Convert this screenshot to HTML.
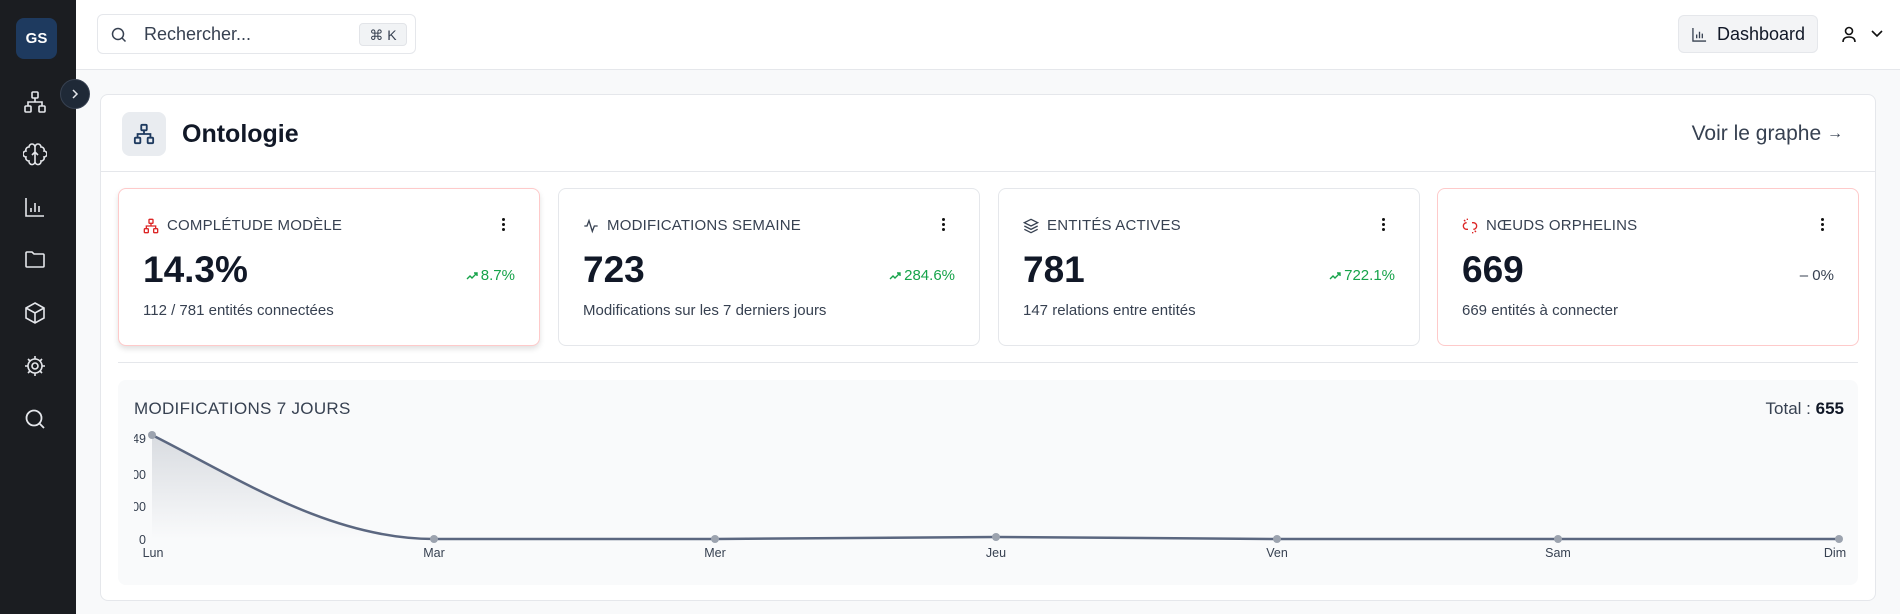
<!DOCTYPE html>
<html><head><meta charset="utf-8"><style>
*{box-sizing:border-box;margin:0;padding:0}
body{width:1900px;height:614px;overflow:hidden;background:#f8f9fa;font-family:"Liberation Sans",sans-serif;color:#111827;position:relative}
.sb{position:absolute;left:0;top:0;width:76px;height:614px;background:#1b1d21}
.av{position:absolute;left:16px;top:18px;width:41px;height:41px;border-radius:8px;background:#1e3a5f;color:#fff;font-weight:bold;font-size:15px;display:flex;align-items:center;justify-content:center}
.ic{position:absolute;left:23px;width:24px;height:24px}
.tog{position:absolute;left:60px;top:79px;width:30px;height:30px;border-radius:50%;background:#1f2937;border:1px solid #374151;display:flex;align-items:center;justify-content:center}
.hd{position:absolute;left:76px;top:0;right:0;height:70px;background:#fff;border-bottom:1px solid #e5e7eb}
.search{position:absolute;left:21px;top:14px;width:319px;height:40px;border:1px solid #e5e7eb;border-radius:6px}
.search span{position:absolute;left:46px;top:9px;font-size:18px;color:#374151}
.kbd{position:absolute;right:8px;top:8px;width:48px;height:23px;background:#f1f3f5;border:1px solid #e2e4e8;border-radius:4px;font-size:14px;color:#374151;text-align:center;line-height:22px}
.dash{position:absolute;left:1602px;top:15px;width:140px;height:38px;border:1px solid #e5e7eb;border-radius:6px;background:#f3f4f6;font-size:18px;line-height:36px;padding-left:38px}
.card{position:absolute;left:100px;top:94px;width:1776px;height:507px;background:#fff;border:1px solid #e5e7eb;border-radius:8px}
.ib{position:absolute;left:21px;top:17px;width:44px;height:44px;border-radius:8px;background:#e9ecf0;display:flex;align-items:center;justify-content:center}
.title{position:absolute;left:81px;top:25px;font-size:25px;font-weight:bold}
.voir{position:absolute;right:32px;top:27px;font-size:21px;color:#374151}
.voir small{font-size:16px;position:relative;top:-2px}
.hl{position:absolute;left:0;right:0;top:76px;border-top:1px solid #e5e7eb}
.st{position:absolute;top:93px;width:422px;height:158px;border:1px solid #e5e7eb;border-radius:8px;background:#fff}
.st.red{border-color:#fecaca}
.st.sh{box-shadow:0 3px 6px rgba(0,0,0,.12)}
.lab{position:absolute;left:48px;top:28px;font-size:15px;color:#374151;letter-spacing:.2px}
.sic{position:absolute;left:24px;top:29px}
.dots{position:absolute;right:34px;top:29px;width:3px}
.dots i{display:block;width:3px;height:3px;background:#111;border-radius:50%;margin-bottom:2px}
.val{position:absolute;left:24px;top:60px;font-size:37px;font-weight:bold;color:#111827}
.pct{position:absolute;right:24px;top:78px;font-size:15px;color:#16a34a}
.pct svg{vertical-align:middle;margin-right:3px}
.sub{position:absolute;left:24px;top:113px;font-size:15px;color:#374151}
.dv{position:absolute;left:17px;right:17px;top:267px;border-top:1px solid #e5e7eb}
.ch{position:absolute;left:17px;top:285px;width:1740px;height:205px;background:#f9fafb;border-radius:8px}
</style></head><body>
<div class="sb">
<div class="av">GS</div>
<svg class="ic" style="top:90px" viewBox="0 0 24 24" fill="none" stroke="#e5e7eb" stroke-width="1.6"><rect x="9" y="2" width="6" height="6" rx="1"/><rect x="2" y="16" width="6" height="6" rx="1"/><rect x="16" y="16" width="6" height="6" rx="1"/><path d="M5 16v-4h14v4M12 8v4"/></svg>
<svg class="ic" style="top:142px" viewBox="0 0 24 24" fill="none" stroke="#e5e7eb" stroke-width="1.6"><path d="M12 5a3 3 0 0 0-6 0 3 3 0 0 0-3 4 3 3 0 0 0 0 6 3 3 0 0 0 3 4 3 3 0 0 0 6 1zM12 5a3 3 0 0 1 6 0 3 3 0 0 1 3 4 3 3 0 0 1 0 6 3 3 0 0 1-3 4 3 3 0 0 1-6 1zM12 5v15M9 13l3-3 3 3"/></svg>
<svg class="ic" style="top:195px" viewBox="0 0 24 24" fill="none" stroke="#e5e7eb" stroke-width="1.6"><path d="M3 3v18h18M8 17v-4M12 17V8M16 17v-6"/></svg>
<svg class="ic" style="top:247px" viewBox="0 0 24 24" fill="none" stroke="#e5e7eb" stroke-width="1.6"><path d="M3 6a1 1 0 0 1 1-1h5l2 2h9a1 1 0 0 1 1 1v11a1 1 0 0 1-1 1H4a1 1 0 0 1-1-1z"/></svg>
<svg class="ic" style="top:301px" viewBox="0 0 24 24" fill="none" stroke="#e5e7eb" stroke-width="1.6"><path d="M12 2l9 5v10l-9 5-9-5V7zM3 7l9 5 9-5M12 12v10"/></svg>
<svg class="ic" style="top:354px" viewBox="0 0 24 24" fill="none" stroke="#e5e7eb" stroke-width="1.6"><circle cx="12" cy="12" r="7"/><circle cx="12" cy="12" r="3"/><path d="M12 2v3M12 19v3M2 12h3M19 12h3M5 5l2 2M17 17l2 2M5 19l2-2M17 7l2-2"/></svg>
<svg class="ic" style="top:407px" viewBox="0 0 24 24" fill="none" stroke="#e5e7eb" stroke-width="1.8"><circle cx="11" cy="11" r="7.5"/><path d="M16.5 16.5L21 21"/></svg>
</div>
<div class="tog"><svg width="12" height="12" viewBox="0 0 12 12" fill="none" stroke="#e5e7eb" stroke-width="1.5"><path d="M4 2l4 4-4 4"/></svg></div>
<div class="hd">
<div class="search"><svg style="position:absolute;left:13px;top:12px" width="16" height="16" viewBox="0 0 16 16" fill="none" stroke="#374151" stroke-width="1.5"><circle cx="7" cy="7" r="5.5"/><path d="M11 11l3.5 3.5"/></svg><span>Rechercher...</span><div class="kbd">⌘ K</div></div>
<div class="dash"><svg style="position:absolute;left:13px;top:11px" width="15" height="15" viewBox="0 0 16 16" fill="none" stroke="#374151" stroke-width="1.4"><path d="M1 1v14h14M5 12V8M8 12V5M11 12V7"/></svg>Dashboard</div>
<svg style="position:absolute;left:1765px;top:26px" width="16" height="17" viewBox="0 0 16 17" fill="none" stroke="#111" stroke-width="1.6"><circle cx="8" cy="5" r="3.5"/><path d="M2 16c0-4 3-5 6-5s6 1 6 5"/></svg>
<svg style="position:absolute;left:1795px;top:30px" width="12" height="8" viewBox="0 0 12 8" fill="none" stroke="#111" stroke-width="1.6"><path d="M1 1l5 5 5-5"/></svg>
</div>
<div class="card">
<div class="ib"><svg width="22" height="22" viewBox="0 0 24 24" fill="none" stroke="#1e3a5f" stroke-width="2"><rect x="9" y="2" width="6" height="6" rx="1"/><rect x="2" y="16" width="6" height="6" rx="1"/><rect x="16" y="16" width="6" height="6" rx="1"/><path d="M5 16v-4h14v4M12 8v4"/></svg></div>
<div class="title">Ontologie</div>
<div class="voir">Voir le graphe <small>→</small></div>
<div class="hl"></div>

<div class="st red sh" style="left:17px">
<svg class="sic" width="16" height="16" viewBox="0 0 24 24" fill="none" stroke="#dc2626" stroke-width="2"><rect x="9" y="2" width="6" height="6" rx="1"/><rect x="2" y="16" width="6" height="6" rx="1"/><rect x="16" y="16" width="6" height="6" rx="1"/><path d="M5 16v-4h14v4M12 8v4"/></svg>
<div class="lab">COMPLÉTUDE MODÈLE</div><div class="dots"><i></i><i></i><i></i></div>
<div class="val">14.3%</div><div class="pct"><svg width="12" height="8" viewBox="0 0 12 8" fill="none" stroke="#16a34a" stroke-width="1.4"><path d="M1 7l3-3 2 2 5-5M8 1h3v3"/></svg>8.7%</div><div class="sub">112 / 781 entités connectées</div></div>

<div class="st" style="left:457px">
<svg class="sic" width="16" height="16" viewBox="0 0 24 24" fill="none" stroke="#374151" stroke-width="2"><path d="M2 12h4l3-8 5 16 3-8h5"/></svg>
<div class="lab">MODIFICATIONS SEMAINE</div><div class="dots"><i></i><i></i><i></i></div>
<div class="val">723</div><div class="pct"><svg width="12" height="8" viewBox="0 0 12 8" fill="none" stroke="#16a34a" stroke-width="1.4"><path d="M1 7l3-3 2 2 5-5M8 1h3v3"/></svg>284.6%</div><div class="sub">Modifications sur les 7 derniers jours</div></div>

<div class="st" style="left:897px">
<svg class="sic" width="16" height="16" viewBox="0 0 24 24" fill="none" stroke="#374151" stroke-width="2"><path d="M12 2l10 5-10 5L2 7zM2 12l10 5 10-5M2 17l10 5 10-5"/></svg>
<div class="lab">ENTITÉS ACTIVES</div><div class="dots"><i></i><i></i><i></i></div>
<div class="val">781</div><div class="pct"><svg width="12" height="8" viewBox="0 0 12 8" fill="none" stroke="#16a34a" stroke-width="1.4"><path d="M1 7l3-3 2 2 5-5M8 1h3v3"/></svg>722.1%</div><div class="sub">147 relations entre entités</div></div>

<div class="st red" style="left:1336px">
<svg class="sic" width="16" height="16" viewBox="0 0 24 24" fill="none" stroke="#dc2626" stroke-width="2"><path d="M9 17H7a5 5 0 0 1 0-10M15 7h2a5 5 0 0 1 0 10M8 3V1M16 21v2M3 3l2 2M21 21l-2-2"/></svg>
<div class="lab">NŒUDS ORPHELINS</div><div class="dots"><i></i><i></i><i></i></div>
<div class="val">669</div><div class="pct" style="color:#374151">– 0%</div><div class="sub">669 entités à connecter</div></div>

<div class="dv"></div>
<div class="ch">
<div style="position:absolute;left:16px;top:19px;font-size:17px;color:#374151;letter-spacing:.3px">MODIFICATIONS 7 JOURS</div>
<div style="position:absolute;right:14px;top:19px;font-size:17px;color:#374151">Total : <b style="color:#111827">655</b></div>
<svg style="position:absolute;left:-117px;top:-380px" width="1900" height="614" viewBox="0 0 1900 614">
<defs><linearGradient id="g" x1="0" y1="0" x2="0" y2="1"><stop offset="0" stop-color="#9ca3af" stop-opacity=".35"/><stop offset="1" stop-color="#9ca3af" stop-opacity="0"/></linearGradient></defs>
<path d="M151 435C240 480 330 539 433 539L1838 539L1838 539 151 539Z" fill="url(#g)"/>
<path d="M151 435C240 480 330 539 433 539L714 539 995 537 1276 539 1557 539 1838 539" fill="none" stroke="#5b6780" stroke-width="2.5"/>
<g fill="#9ca3af"><circle cx="151" cy="435" r="4"/><circle cx="433" cy="539" r="4"/><circle cx="714" cy="539" r="4"/><circle cx="995" cy="537" r="4"/><circle cx="1276" cy="539" r="4"/><circle cx="1557" cy="539" r="4"/><circle cx="1838" cy="539" r="4"/></g>
<g font-family="Liberation Sans" font-size="12.5" fill="#374151" text-anchor="middle"><text x="152" y="557">Lun</text><text x="433" y="557">Mar</text><text x="714" y="557">Mer</text><text x="995" y="557">Jeu</text><text x="1276" y="557">Ven</text><text x="1557" y="557">Sam</text><text x="1834" y="557">Dim</text></g>
<g font-family="Liberation Sans" font-size="12.5" fill="#374151" text-anchor="end"><text x="145" y="443">49</text><text x="145" y="479">00</text><text x="145" y="511">00</text><text x="145" y="544">0</text></g>
</svg>
<div style="position:absolute;left:0;top:0;width:16px;height:205px;background:#f9fafb;border-radius:8px 0 0 8px"></div>
</div>
</div>
</body></html>
